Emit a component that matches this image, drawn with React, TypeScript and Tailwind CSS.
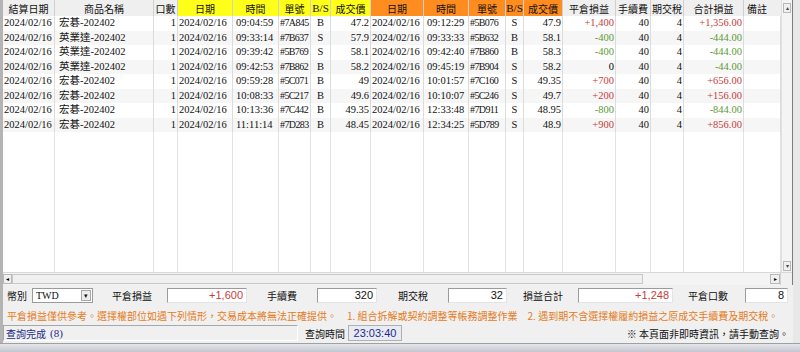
import React from "react";

type Trade = {
  name: string;
  openTime: string;
  openNo: string;
  openBs: string;
  openPx: string;
  closeTime: string;
  closeNo: string;
  closeBs: string;
  closePx: string;
  pl: string;
  total: string;
};

const trades: Trade[] = [
  { name: "宏碁-202402", openTime: "09:04:59", openNo: "#7A845", openBs: "B", openPx: "47.2", closeTime: "09:12:29", closeNo: "#5B076", closeBs: "S", closePx: "47.9", pl: "+1,400", total: "+1,356.00" },
  { name: "英業達-202402", openTime: "09:33:14", openNo: "#7B637", openBs: "S", openPx: "57.9", closeTime: "09:33:33", closeNo: "#5B632", closeBs: "B", closePx: "58.1", pl: "-400", total: "-444.00" },
  { name: "英業達-202402", openTime: "09:39:42", openNo: "#5B769", openBs: "S", openPx: "58.1", closeTime: "09:42:40", closeNo: "#7B860", closeBs: "B", closePx: "58.3", pl: "-400", total: "-444.00" },
  { name: "英業達-202402", openTime: "09:42:53", openNo: "#7B862", openBs: "B", openPx: "58.2", closeTime: "09:45:19", closeNo: "#7B904", closeBs: "S", closePx: "58.2", pl: "0", total: "-44.00" },
  { name: "宏碁-202402", openTime: "09:59:28", openNo: "#5C071", openBs: "B", openPx: "49", closeTime: "10:01:57", closeNo: "#7C160", closeBs: "S", closePx: "49.35", pl: "+700", total: "+656.00" },
  { name: "宏碁-202402", openTime: "10:08:33", openNo: "#5C217", openBs: "B", openPx: "49.6", closeTime: "10:10:07", closeNo: "#5C246", closeBs: "S", closePx: "49.7", pl: "+200", total: "+156.00" },
  { name: "宏碁-202402", openTime: "10:13:36", openNo: "#7C442", openBs: "B", openPx: "49.35", closeTime: "12:33:48", closeNo: "#7D911", closeBs: "S", closePx: "48.95", pl: "-800", total: "-844.00" },
  { name: "宏碁-202402", openTime: "11:11:14", openNo: "#7D283", openBs: "B", openPx: "48.45", closeTime: "12:34:25", closeNo: "#5D789", closeBs: "S", closePx: "48.9", pl: "+900", total: "+856.00" },
];

const COLS =
  "grid grid-cols-[52px_99px_24px_55px_46px_32px_20px_40px_53px_45px_37px_18px_39px_53px_35px_33px_60px_37px]";
const SERIF = "font-['Liberation_Serif','Noto_Sans_CJK_TC',serif]";
const CJK = "font-['Noto_Sans_CJK_TC',sans-serif]";

// colour for profit / loss numbers
function tone(v: string) {
  if (v.startsWith("+")) return "text-[#c63c3c]";
  if (v.startsWith("-")) return "text-[#5e9a35]";
  return "text-black";
}

function Cell({ children, className = "" }: { children?: React.ReactNode; className?: string }) {
  return (
    <div className={`border-r border-[#dcdcdc] px-[1px] whitespace-nowrap overflow-hidden ${className}`}>
      {children}
    </div>
  );
}

function Head({ label, bg, serif }: { label: string; bg: string; serif?: boolean }) {
  return (
    <div
      className={`${bg} ${serif ? SERIF + " text-[11px]" : CJK + " text-[10px]"} flex items-center justify-center border-r border-[#d0d0d0] border-b text-[#111] whitespace-nowrap`}
    >
      {label}
    </div>
  );
}

function Box({ w, children, className = "" }: { w: string; children?: React.ReactNode; className?: string }) {
  return (
    <div
      className={`${w} h-[15px] bg-white border-t border-l border-t-[#9b9b9b] border-l-[#9b9b9b] border-b border-r border-b-[#e4e4e4] border-r-[#e4e4e4] flex items-center justify-end pr-[3px] font-['Liberation_Sans',sans-serif] text-[11px] ${className}`}
    >
      {children}
    </div>
  );
}

export default function App() {
  return (
    <div className="w-[800px] h-[352px] bg-[#f0f0f0] flex flex-col overflow-hidden">
      <div className="flex flex-1 border-l-[3px] border-l-[#b4b4b4] border-r-[7px] border-r-[#e8e8e8] flex-col">
        {/* grid + scrollbars */}
        <div className="h-[285px] flex flex-col border-r border-[#7d7d7d]">
          <div className="flex flex-1 min-h-0">
            <div className="flex flex-col w-[778px] bg-white">
              {/* header */}
              <div className={`${COLS} h-[16px]`}>
                <Head label="結算日期" bg="bg-[#efefef]" />
                <Head label="商品名稱" bg="bg-[#efefef]" />
                <Head label="口數" bg="bg-[#efefef]" />
                <Head label="日期" bg="bg-[#ffff1a]" />
                <Head label="時間" bg="bg-[#ffff1a]" />
                <Head label="單號" bg="bg-[#ffff1a]" />
                <Head label="B/S" bg="bg-[#ffff1a]" serif />
                <Head label="成交價" bg="bg-[#ffff1a]" />
                <Head label="日期" bg="bg-[#ff8c1f]" />
                <Head label="時間" bg="bg-[#ff8c1f]" />
                <Head label="單號" bg="bg-[#ff8c1f]" />
                <Head label="B/S" bg="bg-[#ff8c1f]" serif />
                <Head label="成交價" bg="bg-[#ff8c1f]" />
                <Head label="平倉損益" bg="bg-[#efefef]" />
                <Head label="手續費" bg="bg-[#efefef]" />
                <Head label="期交稅" bg="bg-[#efefef]" />
                <Head label="合計損益" bg="bg-[#efefef]" />
                <div className={`bg-[#efefef] ${CJK} text-[10px] flex items-center pl-[3px] border-b border-[#d0d0d0] text-[#111]`}>
                  備註
                </div>
              </div>

              {/* rows */}
              {trades.map((t, i) => (
                <div
                  key={i}
                  className={`${COLS} h-[14.5px] items-stretch ${SERIF} text-[10.5px] leading-[14.5px] text-[#111] ${i % 2 === 1 ? "bg-[#f6f6f6]" : "bg-white"}`}
                >
                  <Cell>2024/02/16</Cell>
                  <Cell className="pl-[4px]">{t.name}</Cell>
                  <Cell className="text-right">1</Cell>
                  <Cell>2024/02/16</Cell>
                  <Cell className="pl-[3px]">{t.openTime}</Cell>
                  <Cell className="text-[10px] tracking-[-0.6px]">{t.openNo}</Cell>
                  <Cell className="text-center">{t.openBs}</Cell>
                  <Cell className="text-right">{t.openPx}</Cell>
                  <Cell>2024/02/16</Cell>
                  <Cell className="pl-[3px]">{t.closeTime}</Cell>
                  <Cell className="text-[10px] tracking-[-0.6px]">{t.closeNo}</Cell>
                  <Cell className="text-center">{t.closeBs}</Cell>
                  <Cell className="text-right">{t.closePx}</Cell>
                  <Cell className={`text-right ${tone(t.pl)}`}>{t.pl}</Cell>
                  <Cell className="text-right">40</Cell>
                  <Cell className="text-right">4</Cell>
                  <Cell className={`text-right ${tone(t.total)}`}>{t.total}</Cell>
                  <Cell />
                </div>
              ))}

              {/* empty area, column lines continue */}
              <div className={`${COLS} flex-1`}>
                {Array.from({ length: 18 }).map((_, i) => (
                  <div key={i} className="border-r border-[#e2e2e2]" />
                ))}
              </div>
            </div>

            {/* vertical scrollbar */}
            <div className="w-[12px] flex flex-col bg-[#f4f4f4] border-l border-[#e0e0e0]">
              <div className="mt-[3px] h-[10px] mx-[1px] bg-[#f0f0f0] border border-[#b8b8b8] flex items-center justify-center text-[6px] text-[#444] leading-none">
                ▴
              </div>
              <div className="flex-1" />
              <div className="mb-[1px] h-[10px] mx-[1px] bg-[#f0f0f0] border border-[#b8b8b8] flex items-center justify-center text-[6px] text-[#444] leading-none">
                ▾
              </div>
            </div>
          </div>

          {/* horizontal scrollbar */}
          <div className="h-[13px] flex border-t border-[#d8d8d8] bg-[#f4f4f4]">
            <div className="w-[9px] my-[1px] bg-[#f0f0f0] border border-[#b8b8b8] flex items-center justify-center text-[6px] text-black leading-none">
              ◂
            </div>
            <div className="w-[631px] my-[1px] bg-[#f0f0f0] border border-[#c8c8c8]" />
            <div className="flex-1" />
            <div className="w-[10px] my-[1px] bg-[#f0f0f0] border border-[#b8b8b8] flex items-center justify-center text-[6px] text-black leading-none">
              ▸
            </div>
            <div className="w-[12px] bg-[#f0f0f0] border-l border-[#d0d0d0]" />
          </div>
        </div>

        {/* totals toolbar */}
        <div className={`h-[21px] flex items-center ${CJK} text-[10px] text-[#111]`}>
          <div className="w-[29px] pl-[4px] whitespace-nowrap">幣別</div>
          <div className="w-[61px] h-[15px] bg-white border border-[#9b9b9b] flex items-center justify-between pl-[3px] pr-[1px]">
            <span className={`${SERIF} text-[10px]`}>TWD</span>
            <div className="w-[10px] h-[11px] bg-[#ececec] border border-[#a8a8a8] flex items-center justify-center text-[7px] leading-none">▾</div>
          </div>
          <div className="ml-[19px] w-[55px] whitespace-nowrap">平倉損益</div>
          <Box w="w-[80px]" className="text-[#c63c3c]">+1,600</Box>
          <div className="ml-[20px] w-[50px] whitespace-nowrap">手續費</div>
          <Box w="w-[60px]">320</Box>
          <div className="ml-[21px] w-[50px] whitespace-nowrap">期交稅</div>
          <Box w="w-[59px]">32</Box>
          <div className="ml-[16px] w-[55px] whitespace-nowrap">損益合計</div>
          <Box w="w-[95px]" className="text-[#c63c3c]">+1,248</Box>
          <div className="ml-[15px] w-[57px] whitespace-nowrap">平倉口數</div>
          <Box w="w-[43px]">8</Box>
        </div>

        {/* notice */}
        <div className={`h-[18px] flex items-center pl-[4px] ${CJK} text-[10px] text-[#e57c22] whitespace-nowrap`}>
          平倉損益僅供參考。選擇權部位如遇下列情形，交易成本將無法正確提供。　1. 組合拆解或契約調整等帳務調整作業　2. 遇到期不含選擇權履約損益之原成交手續費及期交稅。
        </div>

        {/* status bar */}
        <div className={`h-[18px] flex items-center ${CJK} text-[10px]`}>
          <div className="w-[295px] h-[16px] flex items-center pl-[2px] border border-t-[#a8a8a8] border-l-[#a8a8a8] border-b-white border-r-white text-[#1c2a8a]">
            查詢完成 <span className={`${SERIF} text-[11px] ml-[4px]`}>(8)</span>
          </div>
          <div className="ml-[7px] w-[43px] text-[#111] whitespace-nowrap">查詢時間</div>
          <div className="w-[54px] h-[16px] flex items-center justify-center bg-[#e9ebf2] border border-[#b0b0b0] font-['Liberation_Sans',sans-serif] text-[11px] text-[#1c2a8a]">
            23:03:40
          </div>
          <div className="flex-1" />
          <div className="pr-[4px] text-[#111] whitespace-nowrap">※ 本頁面非即時資訊，請手動查詢。</div>
        </div>
      </div>
      {/* window bottom frame */}
      <div className="h-[9px] bg-gradient-to-b from-[#e4e6ea] to-[#c3c7cf] border-t border-[#a0a0a0]" />
    </div>
  );
}
